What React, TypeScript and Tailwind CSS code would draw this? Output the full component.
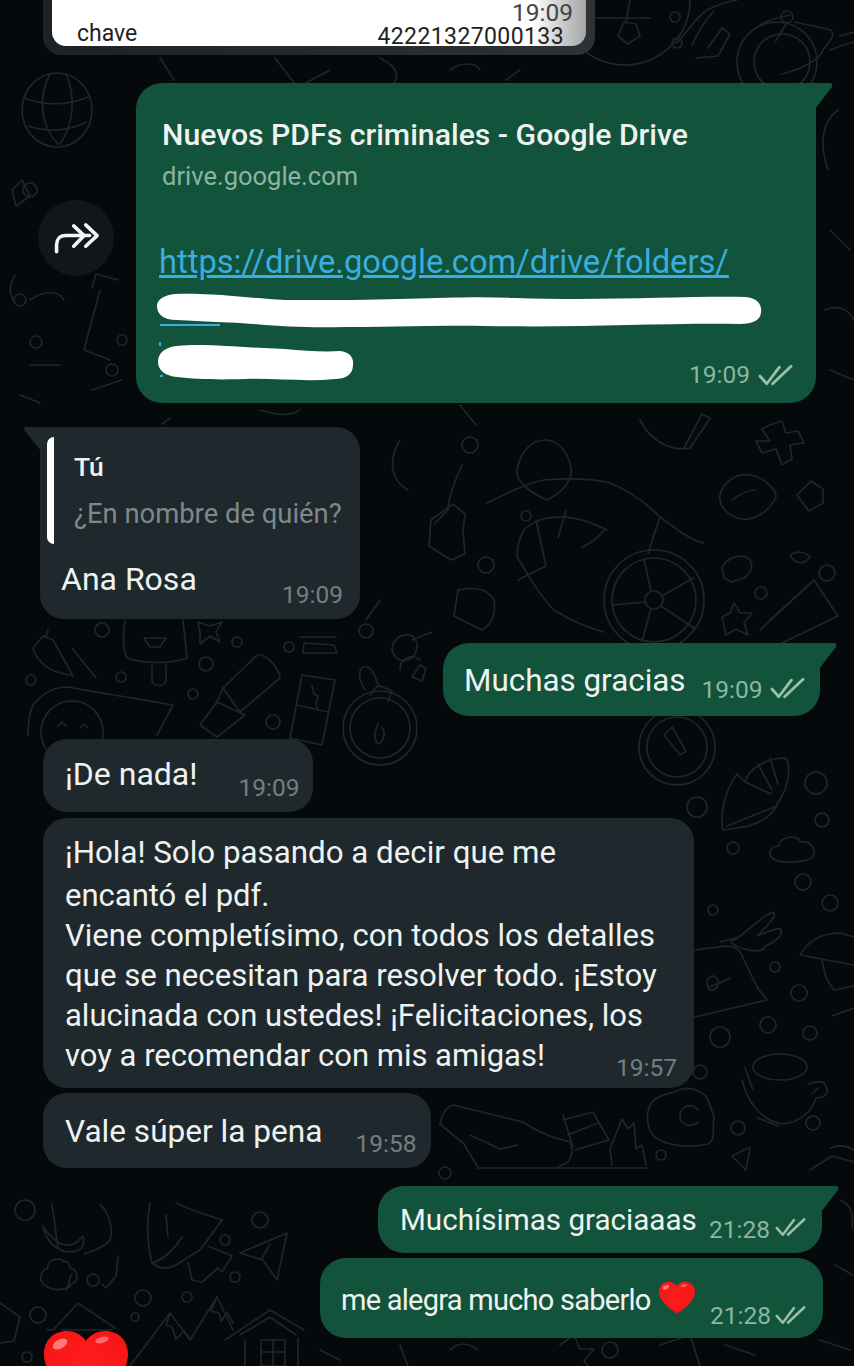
import { ReactNode } from "react";

const dots: [number, number, number][] = [
  [102, 630, 7], [237, 642, 5], [206, 664, 7], [121, 677, 5], [31, 680, 5], [193, 694, 5], [273, 722, 7], [289, 647, 5], [366, 631, 7],
  [697, 807, 10], [816, 783, 11], [822, 820, 7], [733, 848, 6], [803, 882, 8], [830, 903, 8], [713, 910, 5], [775, 967, 5],
  [799, 993, 8], [768, 1025, 8], [720, 1037, 10], [810, 1033, 7], [738, 1128, 7], [813, 1123, 7], [700, 1072, 7], [661, 1155, 5],
  [827, 573, 8], [761, 593, 6], [486, 565, 8], [526, 516, 5], [470, 445, 8],
  [25, 1210, 10], [260, 1220, 8], [225, 1240, 5], [235, 1277, 5], [93, 1280, 6], [143, 1298, 8], [187, 1297, 5], [135, 1317, 4], [38, 1315, 8], [27, 1357, 5],
  [675, 17, 5], [787, 17, 6], [677, 43, 5], [36, 342, 6], [112, 370, 6], [20, 300, 6], [30, 190, 7], [122, 340, 5], [445, 1173, 6],
];

const Doodles = () => (
  <svg
    className="absolute inset-0"
    width="854"
    height="1366"
    viewBox="0 0 854 1366"
    fill="none"
    stroke="#1c2828"
    strokeWidth="1.7"
    strokeLinecap="round"
    strokeLinejoin="round"
  >
    {dots.map(([cx, cy, r]) => (
      <circle key={`${cx}-${cy}`} cx={cx} cy={cy} r={r} />
    ))}
    {/* globe */}
    <ellipse cx="57" cy="110" rx="35" ry="37" />
    <path d="M24 98c20 8 45 8 66-2M28 126c18 6 40 6 58-4M50 74c-12 22-10 52 8 70M66 74c10 22 8 50-6 70" />
    {/* top right */}
    <circle cx="625" cy="0" r="65" />
    <path d="M624 22l-6 14 10 8 12-8-4-12zM590 18h60M630 0l-4 22M677 43c12-14 20-26 30-33 8-4 20-8 30-10M692 45c6-12 12-24 22-34M696 58l22-2 12-22-8-6-14 20" />
    <circle cx="777" cy="62" r="40" />
    <circle cx="782" cy="62" r="28" />
    <path d="M787 22c-4 8-8 14-12 20M795 22l36 8c6 8-6 14-10 24-4 6-20 16-40 20M760 25c10-6 20-8 30-10M830 50c6-2 14-6 24-8M840 36l14-4" />
    {/* steering wheel */}
    <circle cx="654" cy="600" r="50" />
    <circle cx="654" cy="600" r="42" />
    <circle cx="654" cy="600" r="9" />
    <path d="M651 591l-7-32M662 596l31-18M645 602l-32 3M651 609l-9 32M661 606l33 22" />
    {/* big shape above the wheel */}
    <path d="M487 503c20-10 40-20 57-23 24-2 46-2 66 3 20 8 36 20 50 34 14 10 28 22 43 26M517 557c0-14 4-22 7-27 10-10 24-13 36-13 18 0 32 6 47 13M517 557c12 20 24 40 37 53 16 10 34 18 50 22M536 520l10 46-28 14M660 517l-12 36M604 530c-8 12-18 14-22 18M566 510l-8 28M462 465c-8 18-14 36-14 45l-14 14" />
    <path d="M545 440c-18 0-26 18-28 30-2 12 16 24 30 30 16-8 26-20 24-32-2-14-12-28-26-28zM640 420c10 20 30 32 50 28 6-10 16-22 20-30l-8-4-18 34" />
    <path d="M431 520l22-16 12 10-2 18 2 22-14 6-22-14zM458 590c20-4 30 0 36 10 2 14-2 24-12 30l-28-14z" />
    {/* right side shapes */}
    <path d="M762 429l8 12-14 0 6 12 14-4 6 16 10-6-2-14 14-2-6-12-12 2-4-12-12 4zM720 495c2-12 16-22 30-20 14 2 26 14 26 22-6 14-22 24-34 22-14-2-24-14-22-24zM732 500c8-6 16-10 24-10" />
    <path d="M797 495l14-14 12 8 0 14-14 8zM790 555c6-4 14-4 20 2-6 8-14 8-20-2zM722 568c4-10 20-16 28-8 4 6 0 14-6 18l-12 4-8-4z" />
    <path d="M760 630l54-50 24 36-58 28M770 620l42-38M722 617l8-4 4-10 6 10 12 0-8 10 4 12-12-6-10 6z" />
    {/* popsicle, star, bottle, chocolate, stopwatch */}
    <path d="M125 620c-2 14-2 30 2 38 18 6 44 6 60 0l-4-38M152 665v16c2 6 12 6 14 0v-16M144 638h22l-6 9h-10z" />
    <path d="M198 622l12 4 12-4-6 10 4 10-10-6-10 8 0-12z" />
    <path d="M223 688l34-33c8-2 22 12 23 23l-40 34zM217 702l-17 23 17 12 28-22M223 688l-6 14 28 13" />
    <path d="M302 675l33 5-13 65-32-7zM297 705l31 7M312 686l2 8 4 2-2 8 2 6" />
    <path d="M300 637h36M304 643l30 2 3 8h-34z" />
    <circle cx="380" cy="728" r="37" />
    <circle cx="380" cy="728" r="30" />
    <path d="M365 690c-6-10-8-18-2-23 8-2 12 8 16 20M370 695l8-10 14 6-4 10M378 724c-4 8-4 16 0 20 6-2 8-12 4-16" />
    <path d="M392 650c0-10 10-18 20-14 8 6 6 20-4 24-8 2-14-2-16-10zM412 640l20-8M420 665l6 4-4 12-10-4z" />
    {/* smiley and leaf */}
    <path d="M28 735c0-14 2-24 5-30 10-12 22-18 34-18l106 18-16 30" />
    <circle cx="72" cy="732" r="31" />
    <path d="M58 726l4-4 4 4M80 728l4-4 4 4M33 648l10-12 10 4 20 36-16-4c-12-4-22-14-24-24zM48 630l-2 6M72 648l24 30" />
    {/* coin, corn, hand, paper, hat, cup, egg */}
    <circle cx="677" cy="747" r="38" />
    <circle cx="677" cy="747" r="30" />
    <path d="M664 735l8-8 14 24 -6 4z" />
    <path d="M723 830c-4-20 4-42 14-56l8 8c4-14 22-24 40-24 6 4 4 24-2 36l-6 10c-4 12-20 22-40 24zM727 826l50-20M745 782l26 12M758 764l14 26M770 758l8 26" />
    <path d="M775 860c-8-4-6-14 4-14 2-10 16-12 22-4 8-2 16 6 12 14-2 6-28 8-38 4z" />
    <path d="M735 940l30-24 8-4c4 4-2 10-16 24 10-4 24-10 24-6 2 6-6 12-16 16 0 6-12 6-24 2-6-2-10-4-10-8zM720 942l16-4" />
    <path d="M695 950l30-4c10 0 16 4 18 12l14 29 10 13-72 17M708 986c-4-8 6-14 10-6 2 8-8 14-10 8 6-4 12-4 22-10" />
    <path d="M800 955c8-14 22-22 40-22l14 4M800 955l54 10M822 960l4 18 8 12 20-4M832 1016l22-8" />
    <ellipse cx="780" cy="1067" rx="27" ry="13" />
    <path d="M742 1080c6 24 20 40 40 44 20-2 30-14 34-26 8 0 14-4 10-12-2-6-12-4-18-2M745 1068l8 22M758 1118l20 8M812 1094l6-6" />
    <path d="M654 1100c10-8 20-6 24-10 12-4 20 0 28 6 4 8 6 16 8 20-2 14 2 24-6 28-18 4-40 2-52-6-10-8-12-28-2-38zM698 1110c-6-8-18-4-18 6 0 10 12 12 18 6M748 1148l-16 8 14 14 4-22" />
    <path d="M830 1148c10-4 18-2 24 2M810 1170l22-14 22 6" />
    {/* shoe, flames */}
    <path d="M440 1125c2-12 6-18 13-20l70 17c14 10 30 16 47 20 4 8 2 14-2 20l-12 6h-78l-14-24-24-20M563 1115l10 32M563 1120l30-8 16 28-34 10M568 1135l30-12M612 1165l-2-16 12-30 6 10 6-6 2 26 6-4 4 20M478 1168h170M470 1135l30 14 18-4" />
    {/* rocket, plane */}
    <path d="M150 1203c-4 22-2 44 2 60 10 8 20 6 30-2l18-11 22-30-30-10-16-7M152 1263c8-2 20-10 30-26M188 1262l4 18 10 2 16-14 4 4 10-16-24-10M166 1215l2 22" />
    <path d="M240 1253l47-20-10 47-14-20zM270 1244l-8 14" />
    {/* anchor, cloud, roof */}
    <path d="M43 1226c4 20 20 30 36 24 4-2 6-8 4-14-4 4-8 12-22 8-6-4-14-10-18-18zM52 1204l6 44M100 1204c8 8 14 24 10 36-4 6-14 10-26 14M118 1256l-2 20-10 12-4-4M66 1290c4-4 2-12 6-16M64 1262c-4-6-18-2-16 6-8 2-10 14-2 18 8 6 22 4 26-2 8-4 6-14-2-16 0-4-4-8-6-6z" />
    <path d="M53 1330l25-27 37 25M53 1330h-6M62 1330h50M0 1303l20 14-6 24-14 2" />
    {/* mountains, house */}
    <path d="M130 1366l40-53 20 27 27-43 16 33M170 1313l-4 12 6 2 4 12 8-8 6 8M217 1297l-6 14 8 2 2 8 6-8 6 10" />
    <path d="M225 1340l45-30 34 20M240 1335l30-18 26 18M245 1340v26M298 1338v28M261 1340h24v26h-24zM273 1340v26M261 1352h24" />
    <path d="M320 1350l20 10M400 1345l8 21M450 1350c8-8 18-8 28 0M560 1345l14-10 6 14 14 0-10 12 4 5M660 1345l30-10 10 31M725 1345l30 10M820 1340l30 10M835 1265l18 10M840 1200c10 4 14 14 12 28" />
    <circle cx="610" cy="1350" r="8" />
    {/* left strip */}
    <path d="M12 190l10-10 8 16-14 10zM15 275c-6 10-6 20 0 28M100 290l-16 60 26 10M30 365h30M20 395l20 8M30 300c14-10 28-10 34 0M122 380l-30 10M118 280l-22-6-4 14" />
    {/* between top bubbles */}
    <path d="M160 58l14 22M275 58l20 26M330 70l-26 14M380 58c20 10 20 20 10 30M450 70c10-8 26-8 30 0M520 70l-14 10M170 418l-8 6M260 410c20 6 30 6 40 0M460 405l16 20" />
    <path d="M838 110c-14 10-20 30-10 60M830 230l20 20M825 310c14-6 24 0 29 10M830 370l24 10" />
    {/* between left messages */}
    <path d="M400 440c-12 20-10 40 8 50M380 600l-14 20M420 660c-10-8-20 0-20 10M380 830l10-6" />
  </svg>
);

const Ticks = ({ small }: { small?: boolean }) => (
  <svg width={small ? 31 : 35} height={small ? 20 : 22} viewBox="0 0 36 22" fill="none" stroke="#9abfad" strokeWidth="2.9" strokeLinecap="round" strokeLinejoin="round">
    <path d="M2 12l7 8L22 3" />
    <path d="M15 20L34 2" />
  </svg>
);

const Time = ({ children, mine }: { children: ReactNode; mine?: boolean }) => (
  <span className={`text-[24.5px] leading-none ${mine ? "text-[#8db5a2]" : "text-[#747e81]"}`}>{children}</span>
);

const Tail = ({ side }: { side: "left" | "right" }) =>
  side === "right" ? (
    <svg className="absolute -right-[17px] top-0" width="18" height="26" viewBox="0 0 18 26">
      <path d="M0 0h15c2 0 3 2 2 4L0 26z" fill="#12533b" />
    </svg>
  ) : (
    <svg className="absolute -left-[16px] top-0" width="17" height="24" viewBox="0 0 17 24">
      <path d="M17 0H2C0 0-1 2 1 4l16 20z" fill="#1f292d" />
    </svg>
  );

const Bubble = ({ className, children }: { className: string; children: ReactNode }) => (
  <div className={`relative ${className}`}>{children}</div>
);

const Heart = ({ className, size, id }: { className?: string; size: number; id: string }) => (
  <svg className={className} width={size} height={size} viewBox="0 0 84 76">
    <defs>
      <radialGradient id={id} cx="50%" cy="40%" r="70%">
        <stop offset="0%" stopColor="#ff1c1c" />
        <stop offset="70%" stopColor="#f91616" />
        <stop offset="100%" stopColor="#d80f0f" />
      </radialGradient>
    </defs>
    <path d="M42 75C14 56 0 40 0 23 0 9 10 0 23 0c8 0 15 4 19 10C46 4 53 0 61 0c13 0 23 9 23 23 0 17-14 33-42 52z" fill={`url(#${id})`} />
    <ellipse cx="16" cy="13" rx="8" ry="4.5" transform="rotate(-30 16 13)" fill="#ff9c9c" opacity="0.75" />
    <ellipse cx="58" cy="9" rx="7" ry="3" transform="rotate(-15 58 9)" fill="#ff9c9c" opacity="0.6" />
  </svg>
);

export default function App() {
  return (
    <div className="relative w-[854px] h-[1366px] overflow-hidden bg-[#05090b] font-['Roboto',sans-serif] text-[#eef2f1]">
      <Doodles />
      <div className="relative flex flex-col">
        {/* image message cut off by the top edge */}
        <div className="ml-[43px] w-[552px] h-[55px] rounded-b-[18px] bg-linear-to-r from-[#1c2326] to-[#2c3235] px-[9px] pb-[9px]">
          <div className="relative h-[46px] rounded-b-[14px] bg-linear-to-l from-[#a5a5a5] to-white to-[10%] text-[#222] text-[23px] leading-none whitespace-nowrap">
            <span className="absolute left-[25px] top-[22px]">chave</span>
            <span className="absolute right-[13px] top-[1px] text-[#444] text-[24.5px]">19:09</span>
            <span className="absolute right-[22px] top-[25px] tracking-[0.4px]">42221327000133</span>
          </div>
        </div>

        {/* shared link */}
        <div className="mt-[28px] ml-[38px] flex items-start gap-[22px]">
          <div className="mt-[117px] flex h-[76px] w-[76px] shrink-0 items-center justify-center rounded-full bg-[#10161a]">
            <svg width="52" height="35" viewBox="60 60 160 108" fill="none" stroke="#f4f6f6" strokeWidth="11" strokeLinecap="round" strokeLinejoin="round">
              <path d="M80 155v-22c0-16 10-28 28-28h74" />
              <path d="M133 75l32 30-32 33" />
              <path d="M170 72l35 33-35 33" />
            </svg>
          </div>
          <Bubble className="w-[680px] h-[320px] rounded-[26px] rounded-tr-none bg-[#12533b] pl-[24px] pt-[34px] whitespace-nowrap">
            <Tail side="right" />
            <div className="pl-[2px] text-[30.2px] leading-[36px] font-medium">Nuevos PDFs criminales - Google Drive</div>
            <div className="pl-[2px] mt-[5px] text-[25.5px] leading-[36px] text-[#8eb3a1]">drive.google.com</div>
            <div className="mt-[48px] -ml-[1px] text-[32.7px] leading-[40px] text-[#3badde] underline underline-offset-2">
              https://drive.google.com/drive/folders/
            </div>
            {/* redacted part of the link */}
            <svg className="-ml-[5px] mt-[10px]" width="610" height="92" viewBox="0 0 610 92" fill="none">
              <path d="M5 33h60M5 84h3M5 50v4" stroke="#3badde" strokeWidth="2" />
              <path d="M20 2C60 1 90 6 130 8c120 1 170-5 230-2 90 3 170-2 230-1 13 1 17 8 16 15 0 8-8 12-21 12-85-1-155 4-255 2-80-1-160 4-220-1-30-3-60-3-88-5C8 28 2 22 2 14 2 7 10 3 20 2z" fill="#fff" />
              <path d="M22 54c28-3 68 2 108 3 20 2 40 3 55 2 10 1 14 7 13 14 0 10-8 14-18 14-30 3-60-1-90 0-30 1-50 0-68-2C10 84 3 78 3 70c0-9 7-15 19-16z" fill="#fff" />
            </svg>
            <div className="absolute right-[23px] bottom-[16px] flex items-center gap-[8px]">
              <Time mine>19:09</Time>
              <Ticks />
            </div>
          </Bubble>
        </div>

        {/* quoted reply */}
        <Bubble className="mt-[24px] ml-[40px] w-[320px] h-[192px] rounded-[24px] rounded-tl-none bg-[#1f292d] pt-[10px] pl-[7px]">
          <Tail side="left" />
          <div className="flex h-[107px]">
            <div className="w-[7px] rounded-l-[7px] bg-white" />
            <div className="pl-[20px] pt-[15px] whitespace-nowrap">
              <div className="text-[26.5px] leading-[30px] font-medium">Tú</div>
              <div className="mt-[17px] text-[27.4px] leading-[30px] text-[#7e888b]">¿En nombre de quién?</div>
            </div>
          </div>
          <div className="flex items-start pl-[14px] pr-[17px] pt-[17px] justify-between">
            <span className="text-[32px] leading-[36px]">Ana Rosa</span>
            <span className="pt-[22px]"><Time>19:09</Time></span>
          </div>
        </Bubble>

        <Bubble className="mt-[24px] ml-[443px] w-[377px] h-[73px] rounded-[26px] rounded-tr-none bg-[#12533b]">
          <Tail side="right" />
          <div className="flex items-start pl-[21px] pt-[20px] whitespace-nowrap">
            <span className="text-[31.4px] leading-[36px]">Muchas gracias</span>
            <span className="ml-[16px] pt-[15px]"><Time mine>19:09</Time></span>
            <span className="ml-[7px] pt-[14px]"><Ticks /></span>
          </div>
        </Bubble>

        <Bubble className="mt-[23px] ml-[43px] w-[270px] h-[73px] rounded-[24px] bg-[#1f292d]">
          <div className="flex items-start pl-[22px] pt-[17px] whitespace-nowrap">
            <span className="text-[32px] leading-[36px]">¡De nada!</span>
            <span className="ml-[41px] pt-[20px]"><Time>19:09</Time></span>
          </div>
        </Bubble>

        <Bubble className="mt-[6px] ml-[43px] w-[651px] h-[270px] rounded-[24px] bg-[#1f292d] pl-[22px] pt-[15px] whitespace-nowrap">
          <div className="text-[31px] leading-[40px]">
            <div className="mb-[3px] text-[31.3px]">¡Hola! Solo pasando a decir que me</div>
            <div>encantó el pdf.</div>
            <div>Viene completísimo, con todos los detalles</div>
            <div className="text-[31.2px]">que se necesitan para resolver todo. ¡Estoy</div>
            <div>alucinada con ustedes! ¡Felicitaciones, los</div>
            <div>voy a recomendar con mis amigas!</div>
          </div>
          <span className="absolute right-[17px] bottom-[5px]"><Time>19:57</Time></span>
        </Bubble>

        <Bubble className="mt-[5px] ml-[43px] w-[388px] h-[75px] rounded-[24px] bg-[#1f292d]">
          <div className="flex items-start pl-[22px] pt-[21px] whitespace-nowrap">
            <span className="text-[31.6px] leading-[36px]">Vale súper la pena</span>
            <span className="ml-[33px] pt-[18px]"><Time>19:58</Time></span>
          </div>
        </Bubble>

        <Bubble className="mt-[18px] ml-[378px] w-[444px] h-[67px] rounded-[26px] rounded-tr-none bg-[#12533b]">
          <Tail side="right" />
          <div className="flex items-start pl-[22px] pt-[16px] whitespace-nowrap">
            <span className="text-[29.6px] leading-[36px]">Muchísimas graciaaas</span>
            <span className="absolute left-[331px] top-[32px]"><Time mine>21:28</Time></span>
            <span className="absolute left-[397px] top-[31px]"><Ticks small /></span>
          </div>
        </Bubble>

        <Bubble className="mt-[5px] ml-[320px] w-[503px] h-[80px] rounded-[26px] bg-[#12533b]">
          <div className="flex items-start pl-[21px] pt-[24px] whitespace-nowrap">
            <span className="text-[29px] leading-[36px] tracking-[-0.75px]">me alegra mucho saberlo</span>
            <span className="absolute left-[339px] top-[22px]"><Heart size={36} id="heart-small" /></span>
            <span className="absolute left-[390px] top-[46px]"><Time mine>21:28</Time></span>
            <span className="absolute left-[455px] top-[47px]"><Ticks small /></span>
          </div>
        </Bubble>

        <Heart className="-mt-[11px] ml-[44px]" size={84} id="heart-big" />
      </div>
    </div>
  );
}
